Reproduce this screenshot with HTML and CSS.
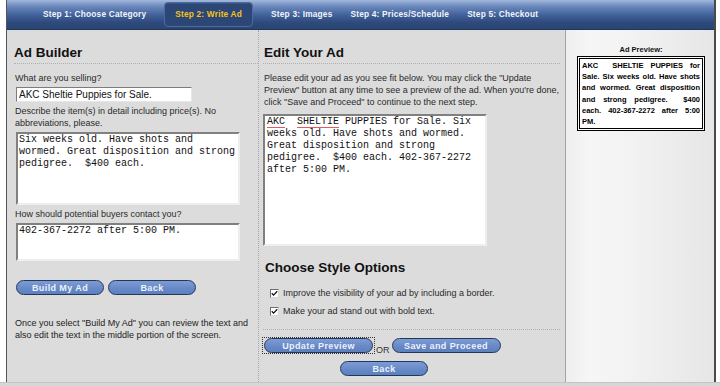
FILE: index.html
```html
<!DOCTYPE html>
<html lang="en">
<head>
  <meta charset="UTF-8" />
  <title>Place an Ad - Step 2: Write Ad</title>
  <link rel="stylesheet" href="styles.css">
</head>
<body>
  <div class="page">
    <nav class="steps">
      <a class="step" href="#category">Step 1: Choose Category</a>
      <a class="step step-active" href="#write">Step 2: Write Ad</a>
      <a class="step" href="#images">Step 3: Images</a>
      <a class="step" href="#prices">Step 4: Prices/Schedule</a>
      <a class="step" href="#checkout">Step 5: Checkout</a>
    </nav>

    <main class="layout">
      <section class="col col-builder">
        <h2 class="col-title">Ad Builder</h2>
        <div class="col-body">
          <label class="field-label" for="title">What are you selling?</label>
          <input class="text-input" id="title" type="text" value="AKC Sheltie Puppies for Sale.">

          <label class="field-label" for="desc">Describe the item(s) in detail including price(s). No abbreviations, please.</label>
          <textarea class="text-area area-desc" id="desc">Six weeks old. Have shots and wormed. Great disposition and strong pedigree.  $400 each.</textarea>

          <label class="field-label" for="contact">How should potential buyers contact you?</label>
          <textarea class="text-area area-contact" id="contact">402-367-2272 after 5:00 PM.</textarea>

          <div class="btn-row builder-btns">
            <button class="pill" type="button">Build My Ad</button>
            <button class="pill" type="button">Back</button>
          </div>

          <p class="note">Once you select "Build My Ad" you can review the text and also edit the text in the middle portion of the screen.</p>
        </div>
      </section>

      <section class="col col-edit">
        <h2 class="col-title">Edit Your Ad</h2>
        <div class="col-body">
          <p class="intro">Please edit your ad as you see fit below. You may click the "Update Preview" button at any time to see a preview of the ad. When you're done, click "Save and Proceed" to continue to the next step.</p>
          <textarea class="text-area area-edit" aria-label="Ad text">AKC  SHELTIE PUPPIES for Sale. Six weeks old. Have shots and wormed. Great disposition and strong pedigree.  $400 each. 402-367-2272 after 5:00 PM.</textarea>

          <h2 class="sub-title">Choose Style Options</h2>
          <label class="option">
            <span class="check"><svg viewBox="0 0 9 9" width="7" height="7"><path d="M1 4.2 L3.3 6.6 L8 1.6" fill="none" stroke="#111" stroke-width="1.6"/></svg></span>
            Improve the visibility of your ad by including a border.
          </label>
          <label class="option">
            <span class="check"><svg viewBox="0 0 9 9" width="7" height="7"><path d="M1 4.2 L3.3 6.6 L8 1.6" fill="none" stroke="#111" stroke-width="1.6"/></svg></span>
            Make your ad stand out with bold text.
          </label>

          <div class="edit-actions">
            <div class="btn-row">
              <span class="focus-ring"><button class="pill pill-wide" type="button">Update Preview</button></span>
              <span class="or">OR</span>
              <button class="pill pill-wide" type="button">Save and Proceed</button>
            </div>
            <button class="pill back-center" type="button">Back</button>
          </div>
        </div>
      </section>

      <aside class="col col-preview">
        <div class="preview-panel">
          <h3 class="preview-title">Ad Preview:</h3>
          <div class="preview-box">AKC&nbsp; SHELTIE PUPPIES for<br>Sale. Six weeks old. Have shots<br>and wormed. Great disposition<br>and strong pedigree.&nbsp; $400<br>each. 402-367-2272 after 5:00<br>PM.</div>
        </div>
      </aside>
    </main>
  </div>
  <div class="bottom-strip"></div>
</body>
</html>
```

FILE: styles.css
```css
body {
  margin: 0;
  background: #fff;
  font-family: "Liberation Sans", Arial, sans-serif;
  color: #222;
}

.page {
  margin-left: 6px;
  width: 707px;
  border-left: 1px solid #555;
  border-right: 2px solid #4a4a4a;
}

/* step tabs */
.steps {
  display: flex;
  align-items: center;
  height: 29px;
  padding-left: 27px;
  background: linear-gradient(#a3b8dc 0%, #6a88bc 22%, #41619a 52%, #2e4a7c 78%, #2a4472 100%);
  border-bottom: 1px solid #22365a;
}

.step {
  padding: 0 9px;
  color: #f2f5fa;
  font-size: 8.3px;
  font-weight: bold;
  letter-spacing: 0.2px;
  text-decoration: none;
  line-height: 23px;
}

.step-active {
  margin: 0 9px;
  padding: 0 10px;
  color: #f5c31c;
  background: #2c4776;
  border: 1px solid #4d6b9c;
  border-radius: 4px;
  box-shadow: inset 0 1px 0 #365485;
}

/* three columns */
.layout {
  display: grid;
  grid-template-columns: 252px 303px 152px;
  height: 352px;
  background: #dcdcdc;
}

.col-builder {
  padding-left: 7px;
  border-right: 1px dotted #a8a8a8;
}

.col-edit {
  padding-left: 4px;
  padding-right: 2px;
}

.col-title {
  margin: 15px 0 0;
  padding-bottom: 2px;
  font-size: 13.5px;
  line-height: 16px;
  color: #111;
  border-bottom: 1px dotted #b0b0b0;
}

.col-edit .col-title {
  padding-left: 1px;
}

.col-builder .col-body {
  padding-left: 1px;
}

.field-label {
  display: block;
  margin-top: 3px;
  font-size: 9px;
  line-height: 12px;
  color: #2a2a2a;
}

.col-builder .field-label:first-child {
  margin-top: 8px;
}

.text-input {
  display: block;
  box-sizing: border-box;
  width: 176px;
  height: 15px;
  margin: 3px 0 0 1px;
  padding: 0 2px;
  font-family: "Liberation Sans", Arial, sans-serif;
  font-size: 10px;
  color: #111;
  background: #fff;
  border: 1px solid;
  border-color: #7c7c7c #e6e6e6 #e6e6e6 #7c7c7c;
}

.text-area {
  display: block;
  box-sizing: border-box;
  width: 224px;
  margin: 3px 0 0 1px;
  padding: 0 1px;
  font-family: "Liberation Mono", "Courier New", monospace;
  font-size: 10px;
  line-height: 12px;
  color: #111;
  background: #fff;
  border: 2px solid;
  border-color: #808080 #eeeeee #eeeeee #808080;
  resize: none;
  overflow: hidden;
  white-space: pre-wrap;
}

.area-desc { height: 73px; }
.area-contact { height: 38px; }

/* red spell-check marks under "AKC" and "SHELTIE" */
.area-edit {
  height: 132px;
  margin: 6px 0 0;
  padding: 0 2px;
  background:
    linear-gradient(#e85a5a, #e85a5a) no-repeat 2px 11px / 18px 1px,
    linear-gradient(#e85a5a, #e85a5a) no-repeat 32px 11px / 42px 1px,
    #fff;
}

/* buttons */
.btn-row {
  display: flex;
  align-items: flex-end;
  gap: 4px;
}

.builder-btns {
  margin-top: 19px;
  padding-left: 1px;
}

.pill {
  display: inline-flex;
  align-items: center;
  justify-content: center;
  box-sizing: border-box;
  width: 88px;
  height: 15px;
  padding: 0;
  font-family: "Liberation Sans", Arial, sans-serif;
  font-size: 9px;
  font-weight: bold;
  letter-spacing: 0.4px;
  color: #edf1f9;
  background: linear-gradient(#7c9cd4, #6688c6 60%, #5c7fbe);
  border: 1px solid #24365a;
  border-radius: 8px;
  cursor: pointer;
}

.pill-wide { width: 109px; }

.note {
  margin: 22px 0 0;
  font-size: 9px;
  line-height: 12px;
  color: #222;
}

.intro {
  margin: 8px 0 0;
  padding-left: 1px;
  font-size: 9px;
  line-height: 12px;
  color: #2a2a2a;
}

.sub-title {
  margin: 14px 0 0;
  padding-left: 2px;
  font-size: 13.5px;
  line-height: 16px;
  color: #111;
}

.option {
  display: flex;
  align-items: center;
  gap: 4px;
  margin-top: 6px;
  padding-left: 7px;
  font-size: 9px;
  line-height: 12px;
  color: #2a2a2a;
}

.sub-title + .option {
  margin-top: 11px;
}

.check {
  display: inline-flex;
  align-items: center;
  justify-content: center;
  box-sizing: border-box;
  width: 9px;
  height: 9px;
  background: #fff;
  border: 1px solid;
  border-color: #707070 #d8d8d8 #d8d8d8 #707070;
}

.edit-actions {
  margin-top: 12px;
  padding-top: 8px;
  border-top: 1px dotted #b0b0b0;
}

.edit-actions .btn-row {
  width: 241px;
  gap: 2px;
}

.focus-ring {
  display: inline-flex;
  padding: 0 1px;
  outline: 1px dotted #333;
}

.or {
  font-size: 9px;
  line-height: 10px;
  margin-bottom: -2px;
  color: #333;
}

.back-center {
  display: flex;
  margin: 8px 0 0 77px;
}

/* preview */
.col-preview {
  padding-left: 3px;
}

.preview-panel {
  height: 100%;
  box-sizing: border-box;
  padding: 15px 9px 0 11px;
  border-left: 1px solid #a4a4a4;
  background: linear-gradient(90deg, #eeeeee, #f6f6f6 15%, #f2f2f2 45%, #e6e6e6 100%);
}

.preview-title {
  margin: 0;
  text-align: center;
  font-size: 7.5px;
  line-height: 10px;
  color: #111;
}

.preview-box {
  margin-top: 1px;
  padding: 1px 2px;
  font-size: 7.5px;
  font-weight: bold;
  line-height: 11.2px;
  color: #000;
  text-align: justify;
  text-align-last: justify;
  background: #fff;
  border: 3px double #000;
}

.bottom-strip {
  height: 4px;
  background: #d6d6d6;
  border-top: 1px solid #c4c4c4;
}
```
